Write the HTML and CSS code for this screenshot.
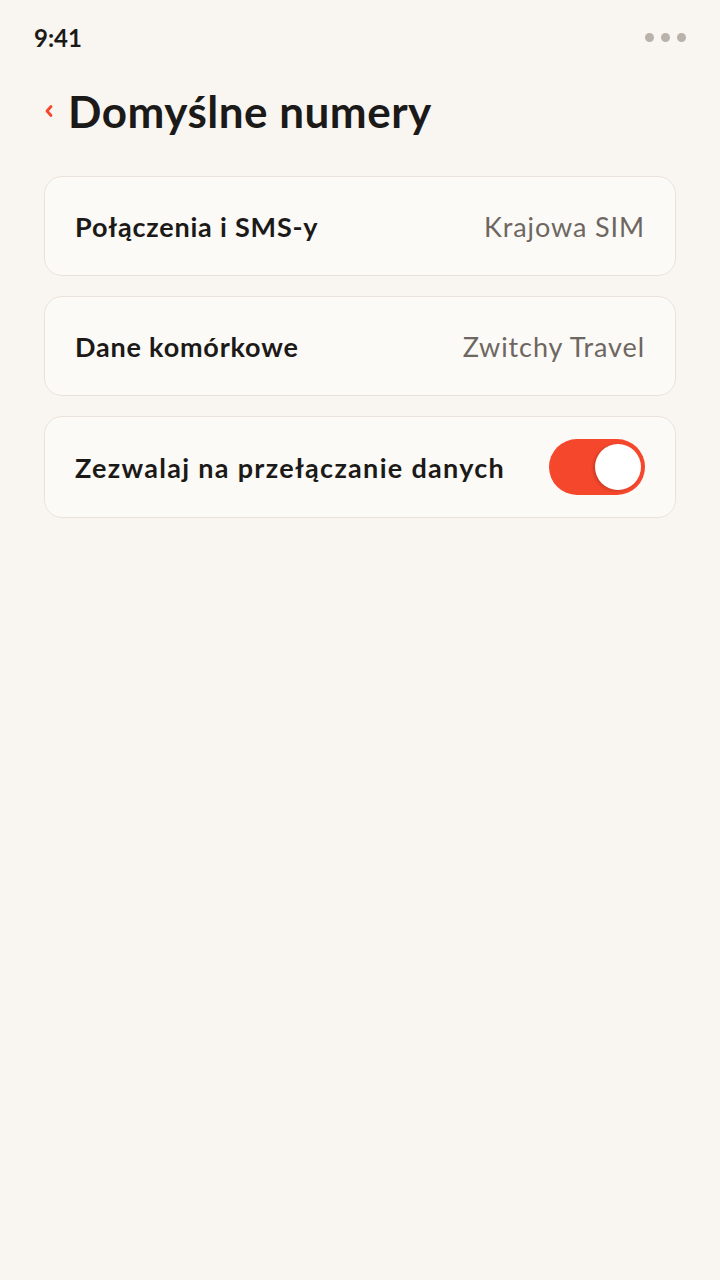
FILE: index.html
```html
<!DOCTYPE html>
<html lang="pl">
<head>
    <meta charset="UTF-8">
    <meta name="viewport" content="width=device-width, initial-scale=1.0">
    <title>Domyślne numery</title>
    <link rel="stylesheet" href="styles.css">
</head>
<body>
    <div class="status-bar">
        <span class="time">9:41</span>
        <span class="dots"><i></i><i></i><i></i></span>
    </div>

    <div class="header">
        <svg class="back" width="10" height="14" viewBox="0 0 10 14">
            <path d="M7 2.5 L3 7 L7 11.5" fill="none" stroke="#f4472b" stroke-width="2.8" stroke-linecap="round" stroke-linejoin="round"/>
        </svg>
        <h1>Domyślne numery</h1>
    </div>

    <div class="list">
        <div class="card">
            <span class="label">Połączenia i SMS-y</span>
            <span class="value">Krajowa SIM</span>
        </div>
        <div class="card">
            <span class="label">Dane komórkowe</span>
            <span class="value">Zwitchy Travel</span>
        </div>
        <div class="card card-toggle">
            <span class="label">Zezwalaj na przełączanie danych</span>
            <span class="toggle on"><span class="knob"></span></span>
        </div>
    </div>
</body>
</html>
```

FILE: styles.css
```css
body {
    font-family: Lato, "Open Sans", sans-serif;
    background-color: #f9f6f2;
    color: #1c1a18;
    margin: 0;
    padding: 0;
    width: 720px;
    min-height: 1280px;
}
.status-bar {
    display: flex;
    justify-content: space-between;
    align-items: center;
    height: 74px;
    padding: 0 34px;
}
.time {
    font-size: 24px;
    font-weight: 700;
}
.dots {
    display: flex;
    gap: 7px;
}
.dots i {
    width: 9px;
    height: 9px;
    border-radius: 50%;
    background-color: #b9b2ab;
}
.header {
    display: flex;
    align-items: center;
    padding: 0 44px;
    height: 74px;
    gap: 14px;
}
.back {
    flex: none;
}
h1 {
    margin: 0;
    font-size: 44px;
    font-weight: 700;
    letter-spacing: 0.5px;
}
.list {
    display: flex;
    flex-direction: column;
    gap: 20px;
    margin: 28px 44px 0;
}
.card {
    display: flex;
    justify-content: space-between;
    align-items: center;
    height: 98px;
    padding: 0 30px;
    background-color: #fcfaf7;
    border: 1px solid #e9e2da;
    border-radius: 18px;
}
.card-toggle {
    height: 100px;
}
.label {
    font-size: 27px;
    font-weight: 700;
    letter-spacing: 0.8px;
}
.card-toggle .label {
    letter-spacing: 1.3px;
}
.value {
    font-size: 27px;
    letter-spacing: 0.9px;
    color: #6e6761;
}
.toggle {
    width: 96px;
    height: 56px;
    border-radius: 28px;
    background-color: #f4472b;
    display: flex;
    align-items: center;
    justify-content: flex-end;
    padding: 0 4px;
    box-sizing: border-box;
}
.knob {
    width: 46px;
    height: 46px;
    border-radius: 50%;
    background-color: #fff;
    box-shadow: -2px 1px 3px rgba(0, 0, 0, 0.15);
}
```
